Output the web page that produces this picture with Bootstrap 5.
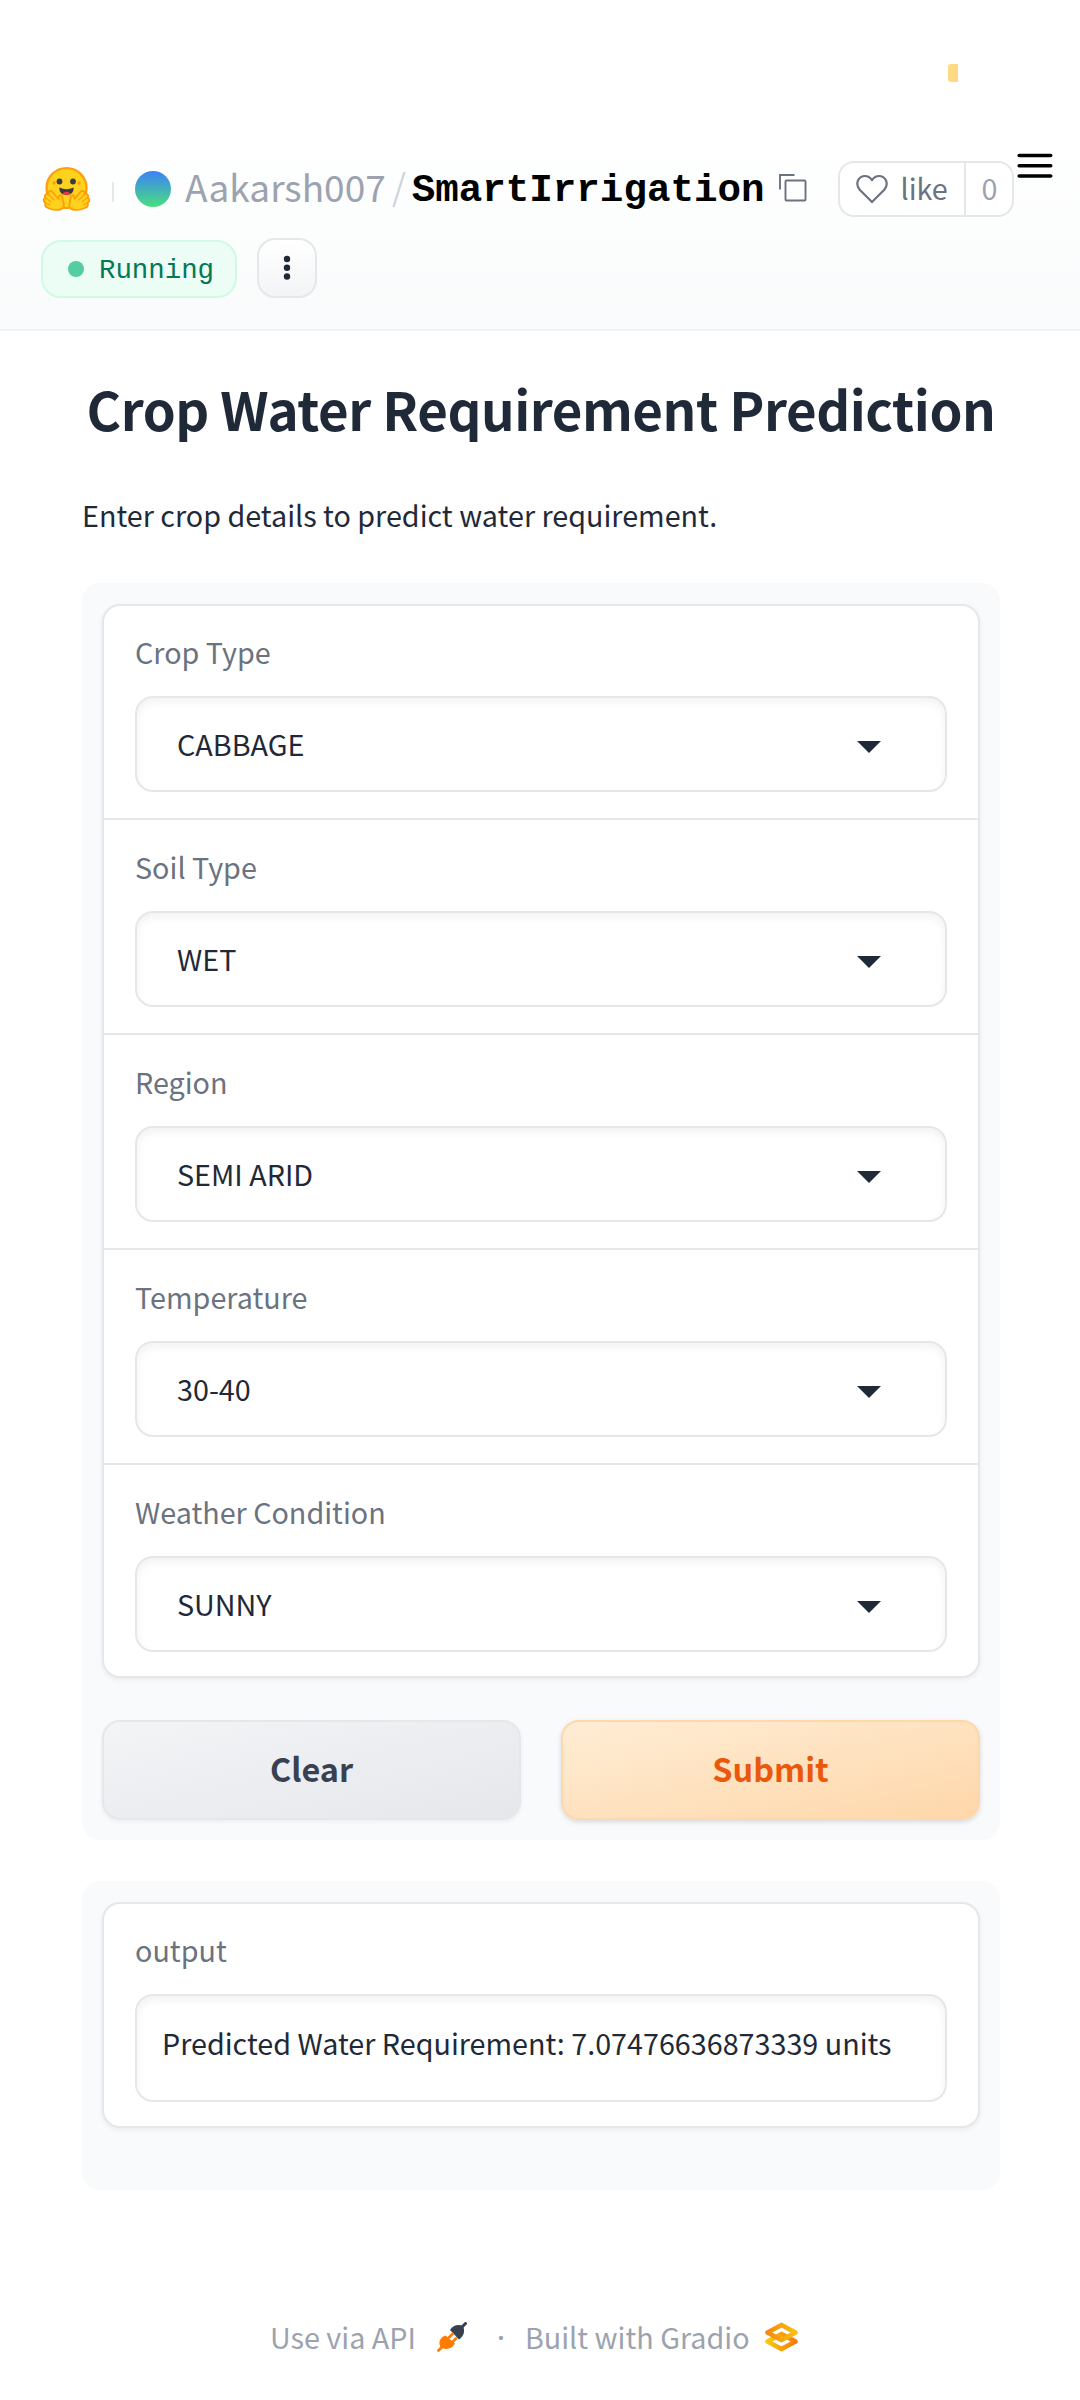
<!DOCTYPE html>
<html lang="en">
<head>
<meta charset="utf-8">
<meta name="viewport" content="width=device-width, initial-scale=1">
<title>SmartIrrigation</title>
<link href="https://cdn.jsdelivr.net/npm/bootstrap@5.3.0/dist/css/bootstrap.min.css" rel="stylesheet">
<style>
  body { font-family: "Noto Sans CJK SC", "Open Sans", sans-serif; font-size: 28.73px; line-height: 40px; color: #1f2937; background: #fff; min-height: 2400px; }
  .mono { font-family: "Liberation Mono", monospace; }
  svg { display: block; flex: none; }
  .top-strip { height: 130px; padding: 64px 0 0 948px; }
  .top-mark { width: 10px; height: 18px; background: #ffda83; border-radius: 3px 0 0 3px; }
  .space-head { height: 201px; padding: 30px 20px 0 41px; background: linear-gradient(#fff, #fcfdfd 50%, #f9fafb); border-bottom: 2px solid #f1f2f4; }
  .head-row { height: 58px; }
  .bar { width: 2px; height: 20px; background: #e5e7eb; margin: 5px 21px 0 21px; }
  .avatar { width: 36px; height: 36px; background: linear-gradient(#3b82f6, #4ade80); }
  .owner { font-size: 37px; color: #9ca3af; margin-left: 14px; padding-bottom: 6px; }
  .slash { margin-left: 6px; }
  .repo { font-size: 39.2px; font-weight: 700; color: #000; margin-left: 6px; padding-top: 4px; }
  .copy-icon { margin: -2px 0 0 15px; }
  .like-box { flex: none; width: 176px; height: 56px; border: 2px solid #e5e7eb; border-radius: 16px; background: #fff; color: #6b7280; margin-left: 31px; }
  .like-main { padding-left: 16px; }
  .like-text { margin-left: 12px; padding-bottom: 3px; }
  .like-count { width: 48px; border-left: 2px solid #e5e7eb; color: #9ca3af; padding-bottom: 3px; }
  .burger { margin: -47px 0 0 3px; }
  .status { width: 196px; height: 58px; border: 2px solid #d1fae5; border-radius: 20px; background: #ecfdf5; color: #047857; font-size: 27.4px; padding-left: 25px; margin-top: 1px; }
  .status i { width: 16px; height: 16px; background: #54cda0; margin-right: 15px; }
  .status span { padding-top: 5px; }
  .more { width: 60px; height: 60px; border: 2px solid #e5e7eb; border-radius: 18px; background: linear-gradient(#fff, #f3f4f6); margin-left: 20px; }
  main { width: 918px; margin-left: 82px; }
  h1.page-title { font-size: 52.8px; font-weight: 700; line-height: 80px; margin: 37px 0 0; letter-spacing: -.45px; white-space: nowrap; }
  .intro { margin: 47px 0 0; }
  .panel-box { background: #f9fafb; border-radius: 18px; padding: 21px 20px 20px; }
  .panel-inputs { margin-top: 48px; }
  .panel-output { margin-top: 41px; height: 309px; }
  .form-box { background: #fff; border: 2px solid #e5e7eb; border-radius: 18px; box-shadow: 0 2px 5px rgba(0,0,0,.06); }
  .field { padding: 27px 31px 26px; border-bottom: 2px solid #e5e7eb; }
  .field:first-child { padding-top: 26px; }
  .field:last-child { border-bottom: 0; padding-bottom: 24px; }
  .field label { display: block; height: 40px; margin-bottom: 24px; color: #6b7280; }
  .pick { height: 96px; border: 2px solid #e5e7eb; border-radius: 18px; padding: 0 64px 0 40px; box-shadow: inset 0 4px 9px rgba(0,0,0,.055); }
  .pick svg { margin-top: 6px; }
  .pick.result { height: 108px; padding: 0 25px 11px; }
  .actions { gap: 40px; margin-top: 42px; }
  .act { height: 100px; border-radius: 18px; font-size: 32.4px; font-weight: 700; border: 2px solid #e5e7eb; box-shadow: 0 2px 4px rgba(0,0,0,.05); padding: 0 0 4px; }
  .act-clear { color: #374151; background: linear-gradient(to bottom right, #f3f4f6, #e5e7eb); }
  .act-submit { color: #ea580c; border-color: #fed7aa; background: linear-gradient(to bottom right, #ffedd5, #fed7aa); box-shadow: 0 2px 5px rgba(0,0,0,.14); }
  footer { color: #9ca3af; padding-left: 270px; margin-top: 127px; height: 40px; white-space: nowrap; }
  .sep { width: 12px; text-align: center; margin: 0 18px 0 28px; font-family: "Open Sans", sans-serif; font-weight: 600; }
</style>
</head>
<body>
<div class="top-strip"><div class="top-mark"></div></div>
<header class="space-head">
  <div class="head-row d-flex align-items-center">
    <svg width="50" height="47" viewBox="0 0 50 47">
      <circle cx="25.500" cy="22" r="20" fill="#ffd21e" stroke="#ff9d0b" stroke-width="2.200"/>
      <path d="M18.500 21.500q7 3.600 14 0c.8 4.500-2.500 7.500-7 7.500s-7.800-3-7-7.500z" fill="#3a3b45"/>
      <path d="M21.500 27.500q4-3.500 8 0-4 2.500-8 0z" fill="#ff323d"/>
      <circle cx="18.500" cy="15.500" r="2.900" fill="#3a3b45"/><circle cx="32" cy="15.500" r="2.900" fill="#3a3b45"/>
      <circle cx="13" cy="17" r="1.700" fill="#ff9d0b"/><circle cx="38" cy="17" r="1.700" fill="#ff9d0b"/>
      <g fill="#ffd21e" stroke="#ff9d0b" stroke-width="1.800" stroke-linejoin="round" stroke-linecap="round">
        <path d="M7 42c-3-1-3.500-3-2.500-5-3-2-2-5 0-5-2-3 1-5 3-3.500-1-3.500 2.500-4.500 4-2.500l6 7c0-5 4-5 4-1 0 3 2 6 1 9-2 4-10 3.500-15.500 1z"/>
        <path d="M44 42c3-1 3.500-3 2.500-5 3-2 2-5 0-5 2-3-1-5-3-3.500 1-3.500-2.500-4.500-4-2.500l-6 7c0-5-4-5-4-1 0 3-2 6-1 9 2 4 10 3.500 15.500 1z"/>
        <path d="M5 32l5 4M5 37l4 2M8 29l5 5M46 32l-5 4M46 37l-4 2M43 29l-5 5" fill="none" stroke-width="1.100"/>
      </g>
    </svg>
    <span class="bar"></span>
    <span class="avatar rounded-circle"></span>
    <span class="owner">Aakarsh007</span>
    <svg class="slash" width="14" height="40"><path d="M1.500 38L12.500 3" stroke="#d1d5db" stroke-width="2.400"/></svg>
    <span class="repo mono">SmartIrrigation</span>
    <svg class="copy-icon" width="28" height="28" fill="none" stroke="#6b7280" stroke-width="1.900"><path d="M1 15.500V1h14.500"/><rect x="6.500" y="6.500" width="20" height="20" rx="1"/></svg>
    <div class="like-box d-flex">
      <div class="like-main d-flex align-items-center flex-fill">
        <svg width="32" height="30" fill="none" stroke="#6b7280" stroke-width="2.200"><path d="M16 28L3.500 15.500C-1.500 9 3 2 9 2c3.500 0 5.500 2 7 4 1.500-2 3.500-4 7-4 6 0 10.500 7 5.500 13.500z"/></svg>
        <span class="like-text">like</span>
      </div>
      <div class="like-count d-flex align-items-center justify-content-center">0</div>
    </div>
    <svg class="burger" width="36" height="26" stroke="#000" stroke-width="3.600" stroke-linecap="round"><path d="M2.200 2.500h31.500M2.200 12.800h31.500M2.200 23h31.500"/></svg>
  </div>
  <div class="d-flex align-items-center" style="margin-top:20px">
    <div class="status mono d-flex align-items-center"><i class="rounded-circle"></i><span>Running</span></div>
    <div class="more d-flex align-items-center justify-content-center"><svg width="8" height="26" fill="#1f2937"><circle cx="4" cy="4" r="3.200"/><circle cx="4" cy="12.800" r="3.200"/><circle cx="4" cy="21.500" r="3.200"/></svg></div>
  </div>
</header>
<main>
  <h1 class="page-title text-center">Crop Water Requirement Prediction</h1>
  <p class="intro">Enter crop details to predict water requirement.</p>
  <section class="panel-box panel-inputs">
    <div class="form-box">
      <div class="field"><label>Crop Type</label><div class="pick d-flex align-items-center justify-content-between"><span>CABBAGE</span><svg width="24" height="12" fill="#1f2937"><path d="M0 0h24L12 12z"/></svg></div></div>
      <div class="field"><label>Soil Type</label><div class="pick d-flex align-items-center justify-content-between"><span>WET</span><svg width="24" height="12" fill="#1f2937"><path d="M0 0h24L12 12z"/></svg></div></div>
      <div class="field"><label>Region</label><div class="pick d-flex align-items-center justify-content-between"><span>SEMI ARID</span><svg width="24" height="12" fill="#1f2937"><path d="M0 0h24L12 12z"/></svg></div></div>
      <div class="field"><label>Temperature</label><div class="pick d-flex align-items-center justify-content-between"><span>30-40</span><svg width="24" height="12" fill="#1f2937"><path d="M0 0h24L12 12z"/></svg></div></div>
      <div class="field"><label>Weather Condition</label><div class="pick d-flex align-items-center justify-content-between"><span>SUNNY</span><svg width="24" height="12" fill="#1f2937"><path d="M0 0h24L12 12z"/></svg></div></div>
    </div>
    <div class="actions d-flex">
      <button class="act act-clear flex-fill w-50">Clear</button>
      <button class="act act-submit flex-fill w-50">Submit</button>
    </div>
  </section>
  <section class="panel-box panel-output">
    <div class="form-box">
      <div class="field"><label>output</label><div class="pick result d-flex align-items-center">Predicted Water Requirement: 7.07476636873339 units</div></div>
    </div>
  </section>
</main>
<footer class="d-flex align-items-center">
  <span>Use via API</span>
  <svg style="margin-left:21px" width="30" height="30" viewBox="0 0 30 30"><path d="M28.500 1.500l-4 4" stroke="#374151" stroke-width="3" stroke-linecap="round"/><path d="M13 8C16 2.500 22 2 26 4c2 4.500 1.500 9.500-4 13.500z" fill="#374151"/><path d="M1.500 28.500l4-4M12 15.500l3.500-3.500M16 19.500l3-3" stroke="#ff7c00" stroke-width="2.800" stroke-linecap="round"/><path d="M8.500 13.500L18 21.500c-3.500 6-9.500 6.500-14 4-3-4-2-9.500 4.500-12z" fill="#ff7c00"/></svg>
  <span class="sep">·</span>
  <span>Built with Gradio</span>
  <svg style="margin-left:14px" width="35" height="30" viewBox="0 0 35 30" fill="none" stroke-width="4.800" stroke-linejoin="round">
    <defs>
      <linearGradient id="lo"><stop offset="0" stop-color="#f9c90a"/><stop offset="1" stop-color="#f67a0c"/></linearGradient>
      <linearGradient id="up"><stop offset="0" stop-color="#f5890c"/><stop offset="1" stop-color="#f9c010"/></linearGradient>
    </defs>
    <path d="M17.500 12L31.500 19.500 17.500 27 3.500 19.500z" stroke="url(#lo)"/>
    <path d="M17.500 3L31.500 10.500 17.500 18 3.500 10.500z" stroke="url(#up)"/>
  </svg>
</footer>
<script src="https://cdn.jsdelivr.net/npm/bootstrap@5.3.0/dist/js/bootstrap.bundle.min.js"></script>
</body>
</html>
